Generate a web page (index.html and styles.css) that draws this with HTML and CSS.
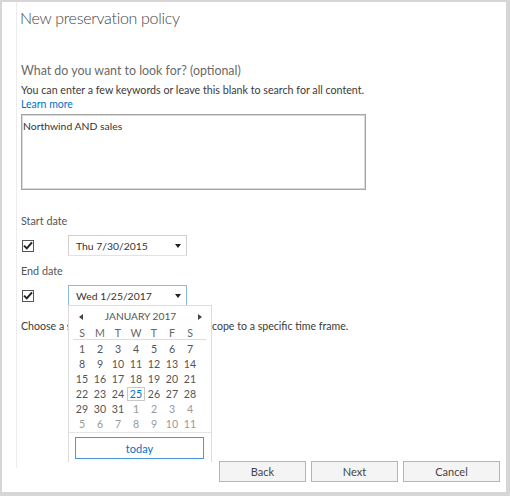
FILE: index.html
```html
<!DOCTYPE html>
<html>
<head>
<meta charset="utf-8">
<link rel="stylesheet" href="styles.css">
</head>
<body>
<div class="frame">
  <div class="content">
    <h1 class="title">New preservation policy</h1>
    <h2 class="section-title">What do you want to look for? (optional)</h2>
    <p class="desc">You can enter a few keywords or leave this blank to search for all content.</p>
    <a class="link" href="#">Learn more</a>
    <div class="textarea">Northwind AND sales</div>

    <div class="label label-start">Start date</div>
    <div class="date-row">
      <span class="checkbox"><svg width="10" height="9" viewBox="0 0 10 9"><path d="M1 4.6 L3.8 7.4 L9 1.4" fill="none" stroke="#222" stroke-width="2"/></svg></span>
      <div class="date-field">
        <span class="date-text">Thu 7/30/2015</span>
        <span class="caret"></span>
      </div>
    </div>

    <div class="label label-end">End date</div>
    <div class="date-row">
      <span class="checkbox"><svg width="10" height="9" viewBox="0 0 10 9"><path d="M1 4.6 L3.8 7.4 L9 1.4" fill="none" stroke="#222" stroke-width="2"/></svg></span>
      <div class="date-field focused">
        <span class="date-text">Wed 1/25/2017</span>
        <span class="caret"></span>
        <div class="popup">
          <div class="cal-head">
            <span class="arrow left"></span>
            <span class="month">JANUARY 2017</span>
            <span class="arrow right"></span>
          </div>
          <div class="cal-grid names">
            <span>S</span><span>M</span><span>T</span><span>W</span><span>T</span><span>F</span><span>S</span>
          </div>
          <div class="cal-grid days">
            <span>1</span><span>2</span><span>3</span><span>4</span><span>5</span><span>6</span><span>7</span>
            <span>8</span><span>9</span><span>10</span><span>11</span><span>12</span><span>13</span><span>14</span>
            <span>15</span><span>16</span><span>17</span><span>18</span><span>19</span><span>20</span><span>21</span>
            <span>22</span><span>23</span><span>24</span><span class="sel">25</span><span>26</span><span>27</span><span>28</span>
            <span>29</span><span>30</span><span>31</span><span class="other">1</span><span class="other">2</span><span class="other">3</span><span class="other">4</span>
            <span class="other">5</span><span class="other">6</span><span class="other">7</span><span class="other">8</span><span class="other">9</span><span class="other">10</span><span class="other">11</span>
          </div>
          <div class="cal-foot">
            <button class="today">today</button>
          </div>
        </div>
      </div>
    </div>

    <p class="hint">Choose a start and end date to limit the scope to a specific time frame.</p>
  </div>

  <div class="actions">
    <button class="btn btn-back">Back</button>
    <button class="btn btn-next">Next</button>
    <button class="btn btn-cancel">Cancel</button>
  </div>
</div>
</body>
</html>
```

FILE: styles.css
```css
* { box-sizing: border-box; }

html, body {
  margin: 0;
  padding: 0;
  background: #ffffff;
}

body {
  font-family: "Segoe UI", "Lato", "Open Sans", sans-serif;
  color: #333;
}

.frame {
  width: 510px;
  height: 496px;
  border-style: solid;
  border-color: #d6d6d6;
  border-width: 2px 4px 4px 2px;
  display: flex;
  flex-direction: column;
  background: #fff linear-gradient(#ececec, #ececec) no-repeat 14px 0 / 1px 466px;
}

.content {
  flex: 1;
  padding-left: 19px;
}

.title {
  margin: 0 0 0 -1px;
  padding-top: 5px;
  font-size: 16px;
  letter-spacing: -0.3px;
  font-weight: 300;
  color: #444;
  line-height: 22px;
}

.section-title {
  margin: 33px 0 0;
  font-size: 12.4px;
  font-weight: 400;
  color: #6a6a6a;
  line-height: 18px;
}

.desc {
  margin: 3px 0 0;
  font-size: 10.7px;
  line-height: 14px;
  color: #3a3a3a;
}

.link {
  display: block;
  font-size: 10.5px;
  line-height: 14px;
  color: #0072c6;
  text-decoration: none;
}

.textarea {
  margin-top: 3px;
  width: 345px;
  height: 76px;
  border: 1px solid #a6a6a6;
  box-shadow: inset 0 0 0 1px #d8d8d8;
  padding: 4px 1px;
  font-size: 10.4px;
  line-height: 14px;
  color: #333;
}

.label {
  font-size: 10.8px;
  line-height: 14px;
  color: #555;
}

.label-start { margin-top: 24px; }
.label-end { margin-top: 8px; }

.date-row {
  display: flex;
  align-items: center;
  margin-top: 7px;
  height: 21px;
}

.checkbox {
  width: 12px;
  height: 12px;
  margin-left: 1px;
  border: 1px solid #555;
  display: flex;
  align-items: center;
  justify-content: center;
  background: #fff;
}

.date-field {
  position: relative;
  margin-left: 34px;
  width: 119px;
  height: 21px;
  border: 1px solid #d0d0d0;
  border-bottom-color: #e2e2e2;
  display: flex;
  align-items: center;
  padding-left: 7px;
  font-size: 10.4px;
  color: #333;
}

.date-field.focused {
  border-color: #8cb8e6;
  border-bottom-color: #e2e2e2;
}

.date-text { flex: 1; }

.caret {
  width: 0;
  height: 0;
  border-left: 3.5px solid transparent;
  border-right: 3.5px solid transparent;
  border-top: 4px solid #222;
  margin-right: 5px;
}

.popup {
  position: absolute;
  top: 19px;
  left: -1px;
  width: 144px;
  height: 157px;
  background: #fff;
  border: 1px solid #dcdcdc;
  border-bottom: none;
  z-index: 2;
  font-size: 10.6px;
  color: #555;
}

.cal-head {
  display: flex;
  align-items: center;
  height: 15px;
  margin-top: 3px;
  padding: 0 9px 0 10px;
  line-height: 13px;
}

.month {
  flex: 1;
  text-align: center;
  font-size: 10.2px;
}

.arrow {
  width: 0;
  height: 0;
  border-top: 3px solid transparent;
  border-bottom: 3px solid transparent;
}
.arrow.left { border-right: 4px solid #444; }
.arrow.right { border-left: 4px solid #444; }

.cal-grid {
  display: grid;
  grid-template-columns: repeat(7, 18px);
  margin-left: 4px;
  width: 133px;
  text-align: center;
}

.names {
  height: 16px;
  padding-top: 3px;
  line-height: 12px;
  border-bottom: 1px solid #dcdcdc;
  color: #666;
}

.days {
  margin-top: 2px;
  grid-auto-rows: 15px;
  line-height: 15px;
}

.days span { color: #555; }
.days span.other { color: #999; }
.days span.sel {
  color: #0072c6;
  border: 1px solid #c8c8c8;
  line-height: 13px;
  height: 14px;
  margin: 0 0 1px;
}

.cal-foot {
  border-top: 1px solid #e6e6e6;
  margin-top: 0;
  padding: 4px 6px 0 6px;
}

.today {
  display: block;
  width: 129px;
  height: 22px;
  border: 1.5px solid #4a95e0;
  background: #fff;
  color: #0072c6;
  font-family: inherit;
  font-size: 11px;
  padding: 0;
}

.hint {
  margin: 13px 0 0;
  font-size: 10.6px;
  line-height: 14px;
  color: #3a3a3a;
}

.actions {
  display: flex;
  justify-content: flex-end;
  gap: 5px;
  padding: 0 6px 10px 0;
}

.btn {
  height: 21px;
  border: 1px solid #b5b5b5;
  background: #f4f4f4;
  color: #444;
  font-family: inherit;
  font-size: 11px;
  padding: 0;
}

.btn-back, .btn-next { width: 87px; }
.btn-cancel { width: 97px; }
```
